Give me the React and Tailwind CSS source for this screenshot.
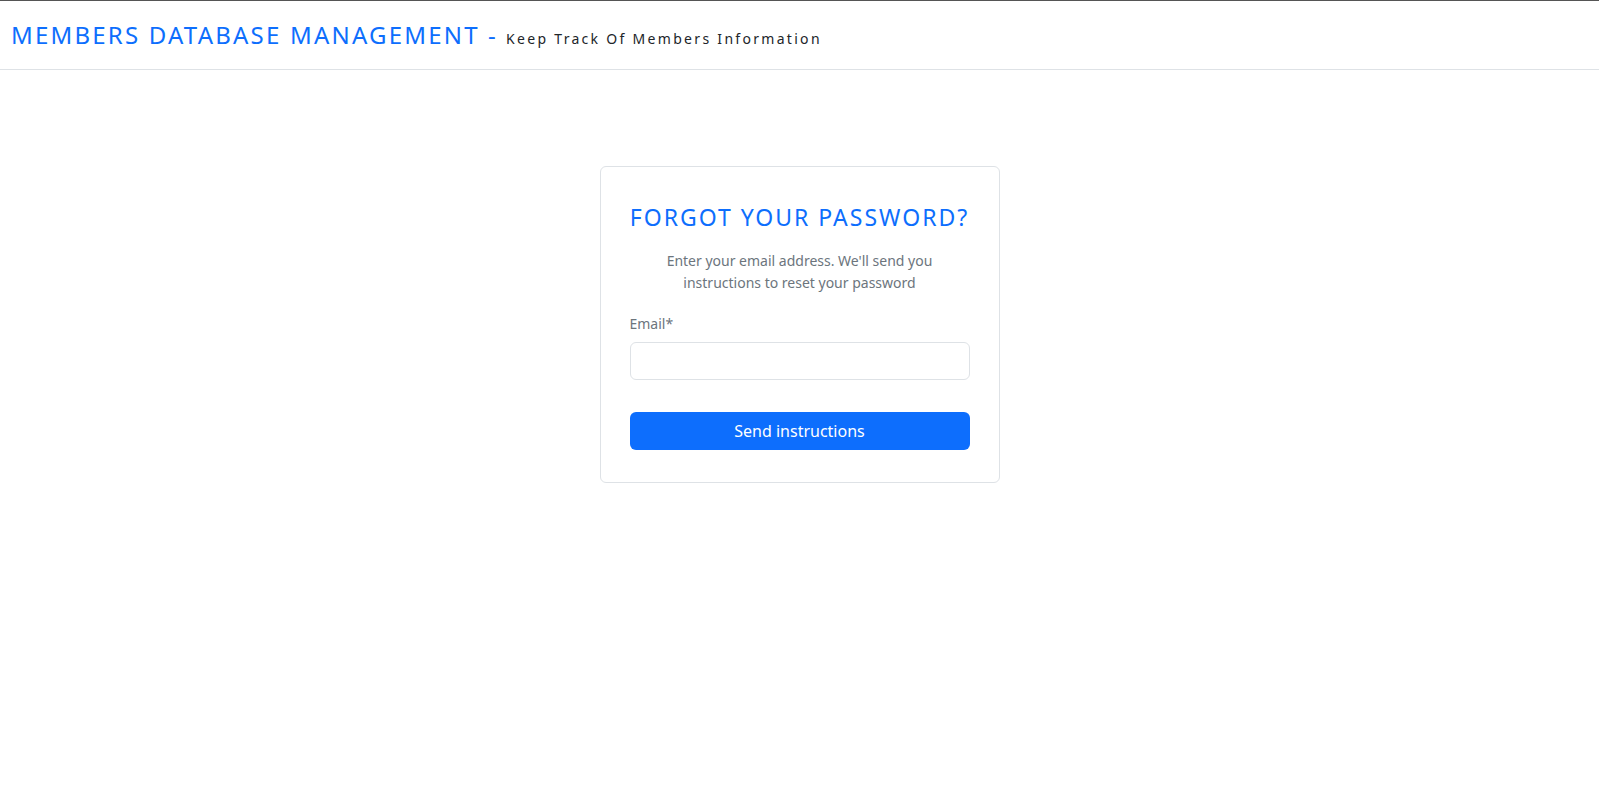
import React, { useState } from 'react';

const App = () => {
    const [email, setEmail] = useState('');

    return (
        <div className="min-h-screen bg-white border-t border-[#555]" style={{ fontFamily: '"Noto Sans", "Open Sans", sans-serif' }}>
            <header className="h-[69px] border-b border-[#dee2e6] flex items-center px-[11px]">
                <h1 className="text-[24px] text-[#0d6efd] tracking-[2.2px] leading-none">
                    MEMBERS DATABASE MANAGEMENT -
                    <span className="ml-2 text-[14px] text-[#212529] tracking-[2.3px]">Keep Track Of Members Information</span>
                </h1>
            </header>

            <div className="flex justify-center pt-[96px]">
                <div className="w-[400px] border border-[#dee2e6] rounded-[6px] px-[29px] pt-[35px] pb-[32px]">
                    <h2 className="text-center text-[23px] text-[#0d6efd] tracking-[2px] leading-[30px]">FORGOT YOUR PASSWORD?</h2>
                    <p className="mt-[18px] text-center text-[14px] leading-[22px] text-[#6c757d] px-[8px]">
                        Enter your email address. We'll send you instructions to reset your password
                    </p>
                    <label className="block mt-[19px] text-[14px] text-[#6c757d] leading-[22px]">Email*</label>
                    <input
                        type="email"
                        value={email}
                        onChange={(e) => setEmail(e.target.value)}
                        className="mt-[7px] w-full h-[38px] border border-[#dee2e6] rounded-[6px] px-3 text-[14px] outline-none"
                    />
                    <button className="mt-[32px] w-full h-[38px] bg-[#0d6efd] text-white rounded-[6px] text-[16px]">
                        Send instructions
                    </button>
                </div>
            </div>
        </div>
    );
};

export default App;
